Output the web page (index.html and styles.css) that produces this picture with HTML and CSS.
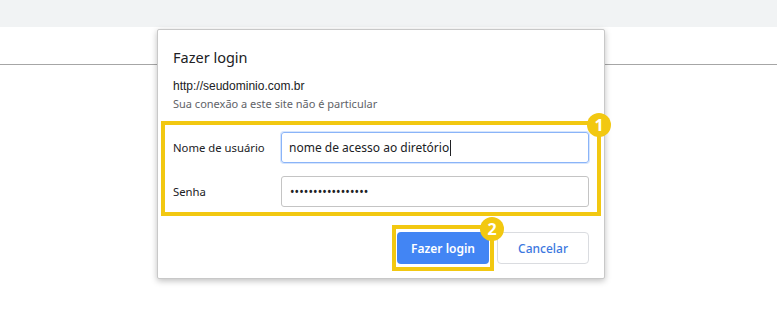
FILE: index.html
```html
<!doctype html>
<html>
<head>
  <title>Fazer login</title>
  <link rel="stylesheet" href="styles.css">
</head>
<body>
  <div class="topbar"></div>
  <div class="toolbar"></div>
  <div class="login-dialog">
    <div class="dialog-title">Fazer login</div>
    <div class="dialog-url">http://seudominio.com.br</div>
    <div class="dialog-note">Sua conexão a este site não é particular</div>
    <div class="highlight fields-box">
      <span class="badge">1</span>
      <div class="field-row">
        <label class="field-label">Nome de usuário</label>
        <div class="field-input focused">nome de acesso ao diretório<span class="caret"></span></div>
      </div>
      <div class="field-row">
        <label class="field-label">Senha</label>
        <div class="field-input password">•••••••••••••••••</div>
      </div>
    </div>
    <div class="dialog-actions">
      <div class="highlight submit-box">
        <span class="badge">2</span>
        <button class="btn btn-primary">Fazer login</button>
      </div>
      <button class="btn btn-secondary">Cancelar</button>
    </div>
  </div>
</body>
</html>
```

FILE: styles.css
```css
body {
  margin: 0;
  padding: 0;
  background: #FFF;
  font-family: "Noto Sans", "Open Sans", sans-serif;
  color: #202124;
}
body * {
  box-sizing: border-box;
}
.topbar {
  height: 27px;
  background: #F1F3F4;
}
.toolbar {
  height: 38px;
  border-bottom: 1px solid #A6A6A6;
}
.login-dialog {
  position: absolute;
  left: 157px;
  top: 29px;
  width: 448px;
  height: 250px;
  padding: 17px 0 0;
  background: #FFF;
  border: 1px solid #C8C8C8;
  border-radius: 2px;
  box-shadow: 0 2px 6px rgba(0,0,0,.25);
}
.dialog-title {
  padding-left: 15px;
  font-size: 14.5px;
  line-height: 20px;
  color: #202124;
}
.dialog-url {
  margin-top: 11px;
  padding-left: 15px;
  font: 12px/16px "Liberation Sans", Arial, sans-serif;
  color: #202124;
}
.dialog-note {
  margin-top: 2px;
  padding-left: 15px;
  font-size: 11px;
  line-height: 16px;
  color: #5F6368;
}
.highlight {
  position: relative;
  border: 4px solid #F2C811;
}
.badge {
  position: absolute;
  top: -12px;
  right: -14px;
  width: 24px;
  height: 24px;
  border-radius: 50%;
  background: #F2C811;
  color: #FFF;
  font: 700 16px/24px "Open Sans", sans-serif;
  text-align: center;
}
.fields-box {
  margin: 9px 0 0 3px;
  width: 440px;
  padding: 7px 8px 5px 8px;
}
.field-row {
  display: flex;
  align-items: center;
}
.field-row + .field-row {
  margin-top: 13px;
}
.field-label {
  width: 108px;
  font-size: 11.3px;
  color: #202124;
}
.field-input {
  width: 308px;
  height: 31px;
  display: flex;
  align-items: center;
  padding-left: 7px;
  border: 1px solid #C4C4C4;
  border-radius: 3px;
  font-size: 12px;
  color: #202124;
}
.field-input.focused {
  border-color: #8AB4F8;
  box-shadow: 0 0 0 1px rgba(138,180,248,.35);
}
.field-input.password {
  padding-left: 8px;
  font-size: 12px;
  letter-spacing: .1px;
}
.caret {
  display: inline-block;
  width: 1px;
  height: 16px;
  margin-left: 1px;
  background: #202124;
}
.dialog-actions {
  display: flex;
  justify-content: flex-end;
  align-items: center;
  margin-top: 9px;
  padding-right: 15px;
}
.submit-box {
  padding: 3px 1px;
}
.btn {
  display: block;
  width: 92px;
  height: 32px;
  border-radius: 4px;
  font: 600 12px "Noto Sans", "Open Sans", sans-serif;
  cursor: pointer;
}
.btn-primary {
  border: 0;
  background: #4285F4;
  color: #FFF;
}
.btn-secondary {
  margin-left: 3px;
  background: #FFF;
  border: 1px solid #DADCE0;
  color: #3C78E0;
  font-weight: 500;
}
```
